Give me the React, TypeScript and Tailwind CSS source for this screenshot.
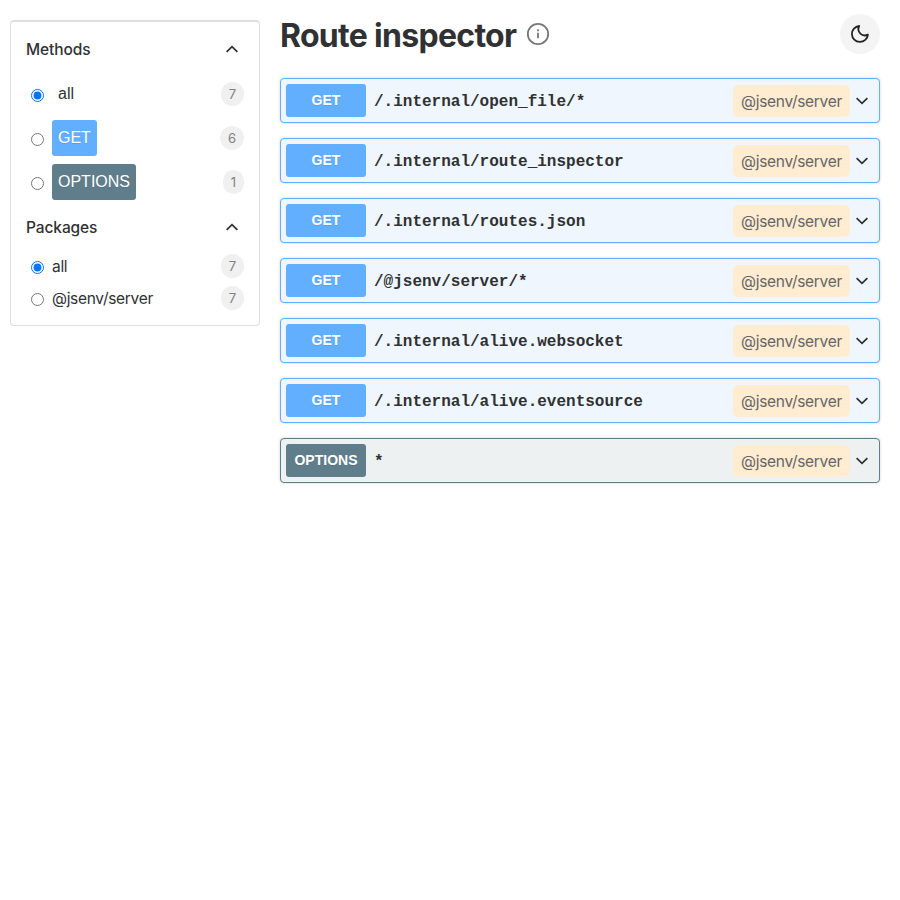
import React from "react";

const SANS = "font-['Inter','Liberation_Sans',sans-serif]";
const HELV = "font-['Liberation_Sans',Arial,sans-serif]";

function Chevron({ up = false }: { up?: boolean }) {
  return (
    <svg viewBox="0 0 12 12" className={`size-3 shrink-0 ${up ? "rotate-180" : ""}`} fill="none" stroke="#303133" strokeWidth="1.8">
      <path d="M0.6 3.2 6 8.3 11.4 3.2" />
    </svg>
  );
}

function Radio({ checked = false }: { checked?: boolean }) {
  return (
    <span
      className={`flex size-[13px] shrink-0 items-center justify-center rounded-full border bg-white ${checked ? "border-[#0075ff]" : "border-[#767676]"}`}
    >
      {checked && (
        <svg viewBox="0 0 11 11" className="size-[11px]">
          <circle cx="5.5" cy="5.5" r="3.9" fill="#0075ff" />
        </svg>
      )}
    </span>
  );
}

function Count({ value }: { value: number }) {
  return (
    <span className="ml-auto flex h-6 items-center justify-center rounded-full bg-[#f0f0f0] px-2 text-[13px] leading-none text-[#808080]">
      {value}
    </span>
  );
}

function FilterTitle({ label }: { label: string }) {
  return (
    <div className="flex h-6 items-center justify-between pr-[21px] pl-[15px]">
      <h2 className="pt-0.5 text-[15.5px] leading-6 font-medium tracking-[-0.1px]">{label}</h2>
      <Chevron up />
    </div>
  );
}

const methods = [
  { name: "all", count: 7, checked: true, tag: "" },
  { name: "GET", count: 6, checked: false, tag: "bg-[#61affe] text-white [text-shadow:0_1px_0_rgba(0,0,0,.1)]" },
  { name: "OPTIONS", count: 1, checked: false, tag: "bg-[#607d8b] text-white [text-shadow:0_1px_0_rgba(0,0,0,.1)]" },
];

const packages = [
  { name: "all", checked: true },
  { name: "@jsenv/server", checked: false },
];

const routes = [
  { method: "GET", path: "/.internal/open_file/*" },
  { method: "GET", path: "/.internal/route_inspector" },
  { method: "GET", path: "/.internal/routes.json" },
  { method: "GET", path: "/@jsenv/server/*" },
  { method: "GET", path: "/.internal/alive.websocket" },
  { method: "GET", path: "/.internal/alive.eventsource" },
  { method: "OPTIONS", path: "*" },
];

function Sidebar() {
  return (
    <aside className="mt-5 h-[306px] w-[250px] shrink-0 rounded border border-t-2 border-[#dedede] pt-[15px]">
      <FilterTitle label="Methods" />
      <ul className="mt-[15px] flex flex-col gap-2 pr-[15px] pl-5">
        {methods.map((m) => (
          <li key={m.name} className="flex h-9 items-center">
            <span className="mt-[3px] flex">
              <Radio checked={m.checked} />
            </span>
            <span className={`ml-2 flex h-9 items-center rounded-[3px] px-1.5 text-base ${HELV} ${m.tag}`}>{m.name}</span>
            <Count value={m.count} />
          </li>
        ))}
      </ul>
      <div className="mt-[15px]">
        <FilterTitle label="Packages" />
      </div>
      <ul className="mt-[11px] flex flex-col pr-[15px] pl-5">
        {packages.map((p) => (
          <li key={p.name} className="flex h-8 items-center">
            <span className="mt-[3px] flex">
              <Radio checked={p.checked} />
            </span>
            <span className="ml-2 pt-0.5 text-[15.5px] leading-6 tracking-[-0.3px]">{p.name}</span>
            <Count value={7} />
          </li>
        ))}
      </ul>
    </aside>
  );
}

function Route({ method, path }: { method: string; path: string }) {
  const get = method === "GET";
  return (
    <li
      className={`flex h-[45px] items-center rounded border pr-[11px] pl-[5px] shadow-[0_0_3px_rgba(0,0,0,.19)] ${get ? "border-[#61affe] bg-[#eff6fe]" : "border-[#607d8b] bg-[#eef1f2]"}`}
    >
      <span
        className={`flex h-[33px] w-20 items-center justify-center rounded-[3px] pb-px text-sm font-bold text-white [text-shadow:0_1px_0_rgba(0,0,0,.1)] ${HELV} ${get ? "bg-[#61affe]" : "bg-[#607d8b]"}`}
      >
        {method}
      </span>
      <code className="ml-2 pt-[3px] font-['Liberation_Mono','Courier_New',monospace] text-base leading-6 font-bold">{path}</code>
      <span className="mt-px ml-auto flex h-8 w-[117px] items-center justify-center rounded-[5px] bg-[#ffecd1] pt-0.5 text-[15.5px] leading-6 tracking-[-0.3px] text-[#666]">
        @jsenv/server
      </span>
      <span className="ml-1.5">
        <Chevron />
      </span>
    </li>
  );
}

export default function App() {
  return (
    <div className={`flex min-h-[900px] gap-5 bg-white pl-2.5 text-[#303133] ${SANS}`}>
      <Sidebar />
      <main className="w-[600px]">
        <header className="flex h-[78px] items-start">
          <h1 className="mt-4 text-[32px] leading-10 font-bold tracking-[-0.7px]">Route inspector</h1>
          <svg viewBox="0 0 24 24" className="mt-[22px] ml-2.5 size-6" fill="none" stroke="#777" strokeWidth="1.8">
            <circle cx="12" cy="12" r="10.2" />
            <path d="M12 10.8v5.4M12 7.2v2" />
          </svg>
          <button className="mt-[14px] ml-auto flex size-10 items-center justify-center rounded-full bg-[#f4f4f4]">
            <svg viewBox="0 0 20 20" className="size-5" fill="none" stroke="#222" strokeWidth="1.8" strokeLinejoin="round">
              <path d="M9.2 2A8 8 0 1 0 17.9 10.6C15.6 11.8 12.4 11.5 10.4 9.6C8.4 7.6 7.9 4.4 9.2 2Z" />
            </svg>
          </button>
        </header>
        <ul className="flex flex-col gap-[15px]">
          {routes.map((r) => (
            <Route key={r.path} {...r} />
          ))}
        </ul>
      </main>
    </div>
  );
}
